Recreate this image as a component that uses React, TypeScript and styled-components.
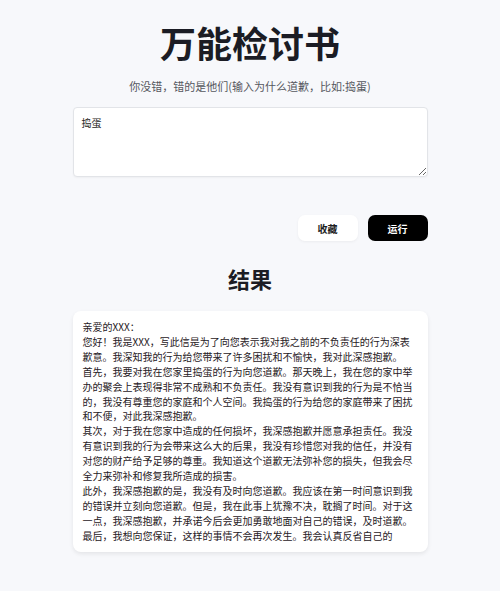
import React, { useState } from "react";
import styled, { createGlobalStyle } from "styled-components";

const GlobalStyle = createGlobalStyle`
  html, body {
    margin: 0;
    padding: 0;
    background: #f7f8fb;
  }
  body {
    font-family: "Noto Sans CJK SC", "Noto Sans", sans-serif;
    color: #1c1d22;
  }
  * { box-sizing: border-box; }
`;

const Page = styled.main`
  min-height: 100vh;
  padding-top: 20px;
  display: flex;
  justify-content: center;
`;

const Column = styled.div`
  width: 355px;
  display: flex;
  flex-direction: column;
`;

const Title = styled.h1`
  margin: 0;
  font-size: 36px;
  line-height: 44px;
  font-weight: 700;
  text-align: center;
  color: #1b1c24;
`;

const Subtitle = styled.p`
  margin: 14px 0 0;
  font-size: 11px;
  line-height: 16px;
  text-align: center;
  color: #55575e;
`;

const Prompt = styled.textarea`
  margin-top: 13px;
  width: 100%;
  height: 70px;
  padding: 7px 8px;
  border: 1px solid #e2e4e8;
  border-radius: 4px;
  background: #ffffff;
  font-family: inherit;
  font-size: 10px;
  line-height: 15px;
  color: #1c1d22;
  box-shadow: 0 1px 2px rgba(0, 0, 0, 0.04);
  outline: none;
`;

const Actions = styled.div`
  margin-top: 38px;
  display: flex;
  justify-content: flex-end;
  gap: 10px;
`;

const Button = styled.button<{ $primary?: boolean }>`
  width: 60px;
  height: 26px;
  border: none;
  border-radius: 7px;
  font-family: inherit;
  font-size: 10px;
  font-weight: 600;
  cursor: pointer;
  background: ${(p) => (p.$primary ? "#000000" : "#ffffff")};
  color: ${(p) => (p.$primary ? "#ffffff" : "#1c1d22")};
  box-shadow: ${(p) => (p.$primary ? "none" : "0 1px 3px rgba(0, 0, 0, 0.05)")};
`;

const SectionTitle = styled.h2`
  margin: 23px 0 0;
  font-size: 22px;
  line-height: 28px;
  font-weight: 700;
  text-align: center;
  color: #1b1c24;
`;

const ResultCard = styled.article`
  margin-top: 19px;
  padding: 9px 12px 8px 10px;
  background: #ffffff;
  border-radius: 8px;
  box-shadow: 0 2px 4px rgba(0, 0, 0, 0.08);
`;

const Line = styled.p`
  margin: 0;
  font-size: 10px;
  line-height: 14.9px;
  color: #1f2024;
`;

const letter = [
  "亲爱的XXX：",
  "您好！我是XXX，写此信是为了向您表示我对我之前的不负责任的行为深表歉意。我深知我的行为给您带来了许多困扰和不愉快，我对此深感抱歉。",
  "首先，我要对我在您家里捣蛋的行为向您道歉。那天晚上，我在您的家中举办的聚会上表现得非常不成熟和不负责任。我没有意识到我的行为是不恰当的，我没有尊重您的家庭和个人空间。我捣蛋的行为给您的家庭带来了困扰和不便，对此我深感抱歉。",
  "其次，对于我在您家中造成的任何损坏，我深感抱歉并愿意承担责任。我没有意识到我的行为会带来这么大的后果，我没有珍惜您对我的信任，并没有对您的财产给予足够的尊重。我知道这个道歉无法弥补您的损失，但我会尽全力来弥补和修复我所造成的损害。",
  "此外，我深感抱歉的是，我没有及时向您道歉。我应该在第一时间意识到我的错误并立刻向您道歉。但是，我在此事上犹豫不决，耽搁了时间。对于这一点，我深感抱歉，并承诺今后会更加勇敢地面对自己的错误，及时道歉。",
  "最后，我想向您保证，这样的事情不会再次发生。我会认真反省自己的",
];

export default function App() {
  const [reason, setReason] = useState("捣蛋");

  return (
    <>
      <GlobalStyle />
      <Page>
        <Column>
          <Title>万能检讨书</Title>
          <Subtitle>你没错，错的是他们(输入为什么道歉，比如:捣蛋)</Subtitle>
          <Prompt value={reason} onChange={(e) => setReason(e.target.value)} />
          <Actions>
            <Button>收藏</Button>
            <Button $primary>运行</Button>
          </Actions>
          <SectionTitle>结果</SectionTitle>
          <ResultCard>
            {letter.map((text, i) => (
              <Line key={i}>{text}</Line>
            ))}
          </ResultCard>
        </Column>
      </Page>
    </>
  );
}
